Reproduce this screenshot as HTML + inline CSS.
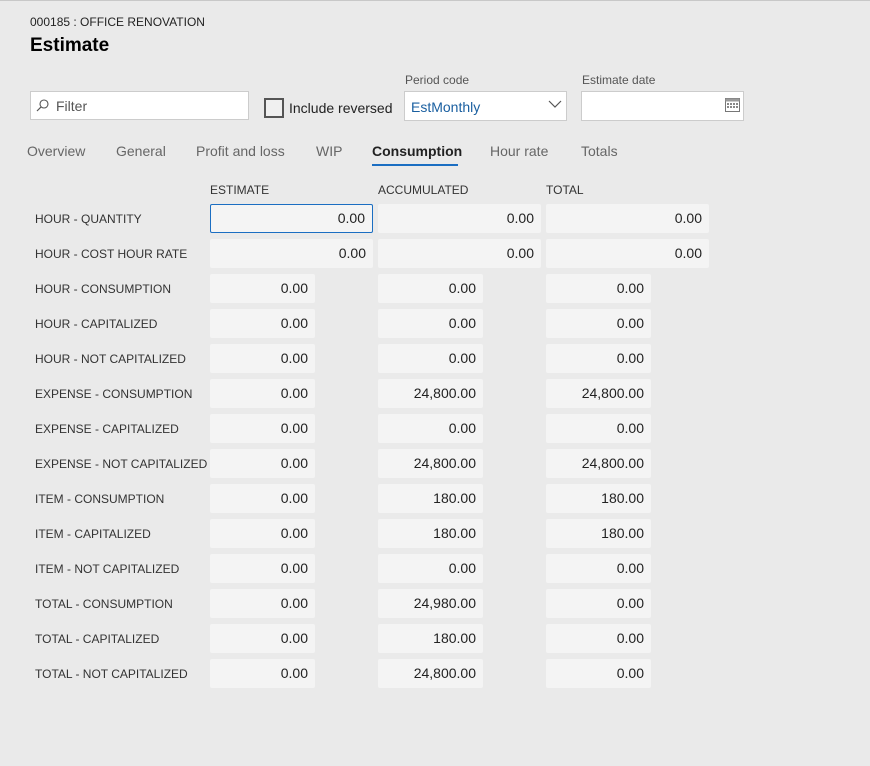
<!DOCTYPE html><html><head><style>
body{margin:0;width:870px;height:766px;background:#eaeaea;font-family:"Liberation Sans",sans-serif;position:relative;overflow:hidden;color:#222}
.a{position:absolute}
.top{left:0;top:0;width:870px;height:1px;background:#c8c8c8}
.lbl{font-size:12px;color:#333;left:35px}
.box{background:#f4f4f4;border-radius:2px;font-size:14px;text-align:right;box-sizing:border-box;padding-right:7px;height:29px;line-height:29px;color:#222}
.tab{font-size:14px;color:#666;top:143px}
.hd{font-size:12px;color:#333;top:183px}
</style></head><body>
<div class="a top"></div>
<div class="a" style="left:30px;top:15px;font-size:12px;color:#222">000185 : OFFICE RENOVATION</div>
<div class="a" style="left:30px;top:35px;font-size:19px;font-weight:bold;color:#000">Estimate</div>
<div class="a" style="left:30px;top:91px;width:219px;height:29px;background:#fff;border:1px solid #ccc;box-sizing:border-box"></div>
<svg class="a" style="left:36px;top:99px" width="13" height="13" viewBox="0 0 13 13"><circle cx="8" cy="5" r="4" fill="none" stroke="#555" stroke-width="1.1"/><line x1="5.2" y1="7.8" x2="1" y2="12" stroke="#555" stroke-width="1.2"/></svg>
<div class="a" style="left:56px;top:98px;font-size:14px;color:#555">Filter</div>
<div class="a" style="left:264px;top:98px;width:20px;height:20px;border:2px solid #555;box-sizing:border-box;background:#f0f0f0"></div>
<div class="a" style="left:289px;top:100px;font-size:14px;color:#222">Include reversed</div>
<div class="a" style="left:405px;top:73px;font-size:12px;color:#555">Period code</div>
<div class="a" style="left:404px;top:91px;width:163px;height:30px;background:#fff;border:1px solid #ccc;box-sizing:border-box"></div>
<div class="a" style="left:411px;top:99px;font-size:14px;color:#1a5fa0">EstMonthly</div>
<svg class="a" style="left:548px;top:100px" width="14" height="9"><polyline points="1,1 7,7 13,1" fill="none" stroke="#555" stroke-width="1.2"/></svg>
<div class="a" style="left:582px;top:73px;font-size:12px;color:#555">Estimate date</div>
<div class="a" style="left:581px;top:91px;width:163px;height:30px;background:#fff;border:1px solid #ccc;box-sizing:border-box"></div>
<svg class="a" style="left:725px;top:98px" width="15" height="14" viewBox="0 0 15 14"><rect x="0.5" y="0.5" width="14" height="13" fill="none" stroke="#777"/><rect x="0.5" y="0.5" width="14" height="3" fill="#999"/><g fill="#888"><rect x="2" y="5" width="2" height="2"/><rect x="5" y="5" width="2" height="2"/><rect x="8" y="5" width="2" height="2"/><rect x="11" y="5" width="2" height="2"/><rect x="2" y="8" width="2" height="2"/><rect x="5" y="8" width="2" height="2"/><rect x="8" y="8" width="2" height="2"/><rect x="11" y="8" width="2" height="2"/></g></svg>
<div class="a tab" style="left:27px">Overview</div>
<div class="a tab" style="left:116px">General</div>
<div class="a tab" style="left:196px">Profit and loss</div>
<div class="a tab" style="left:316px">WIP</div>
<div class="a tab" style="left:372px;color:#222;font-weight:bold">Consumption</div>
<div class="a" style="left:372px;top:164px;width:86px;height:2px;background:#1b6ec2"></div>
<div class="a tab" style="left:490px">Hour rate</div>
<div class="a tab" style="left:581px">Totals</div>
<div class="a hd" style="left:210px">ESTIMATE</div>
<div class="a hd" style="left:378px">ACCUMULATED</div>
<div class="a hd" style="left:546px">TOTAL</div>
<div id="rows"></div>
<script>
var d=[["HOUR - QUANTITY","0.00","0.00","0.00",1],["HOUR - COST HOUR RATE","0.00","0.00","0.00",1],["HOUR - CONSUMPTION","0.00","0.00","0.00"],["HOUR - CAPITALIZED","0.00","0.00","0.00"],["HOUR - NOT CAPITALIZED","0.00","0.00","0.00"],["EXPENSE - CONSUMPTION","0.00","24,800.00","24,800.00"],["EXPENSE - CAPITALIZED","0.00","0.00","0.00"],["EXPENSE - NOT CAPITALIZED","0.00","24,800.00","24,800.00"],["ITEM - CONSUMPTION","0.00","180.00","180.00"],["ITEM - CAPITALIZED","0.00","180.00","180.00"],["ITEM - NOT CAPITALIZED","0.00","0.00","0.00"],["TOTAL - CONSUMPTION","0.00","24,980.00","0.00"],["TOTAL - CAPITALIZED","0.00","180.00","0.00"],["TOTAL - NOT CAPITALIZED","0.00","24,800.00","0.00"]];
var h="";d.forEach(function(r,i){var t=204+35*i,w=r[4]?163:105;
h+='<div class="a lbl" style="top:'+(t+8)+'px">'+r[0]+'</div>';
[210,378,546].forEach(function(x,j){var st=(i==0&&j==0)?'border:1px solid #1b6ec2;line-height:27px;':'';
h+='<div class="a box" style="left:'+x+'px;top:'+t+'px;width:'+w+'px;'+st+'">'+r[j+1]+'</div>';});});
document.getElementById("rows").innerHTML=h;
</script>
</body></html>
